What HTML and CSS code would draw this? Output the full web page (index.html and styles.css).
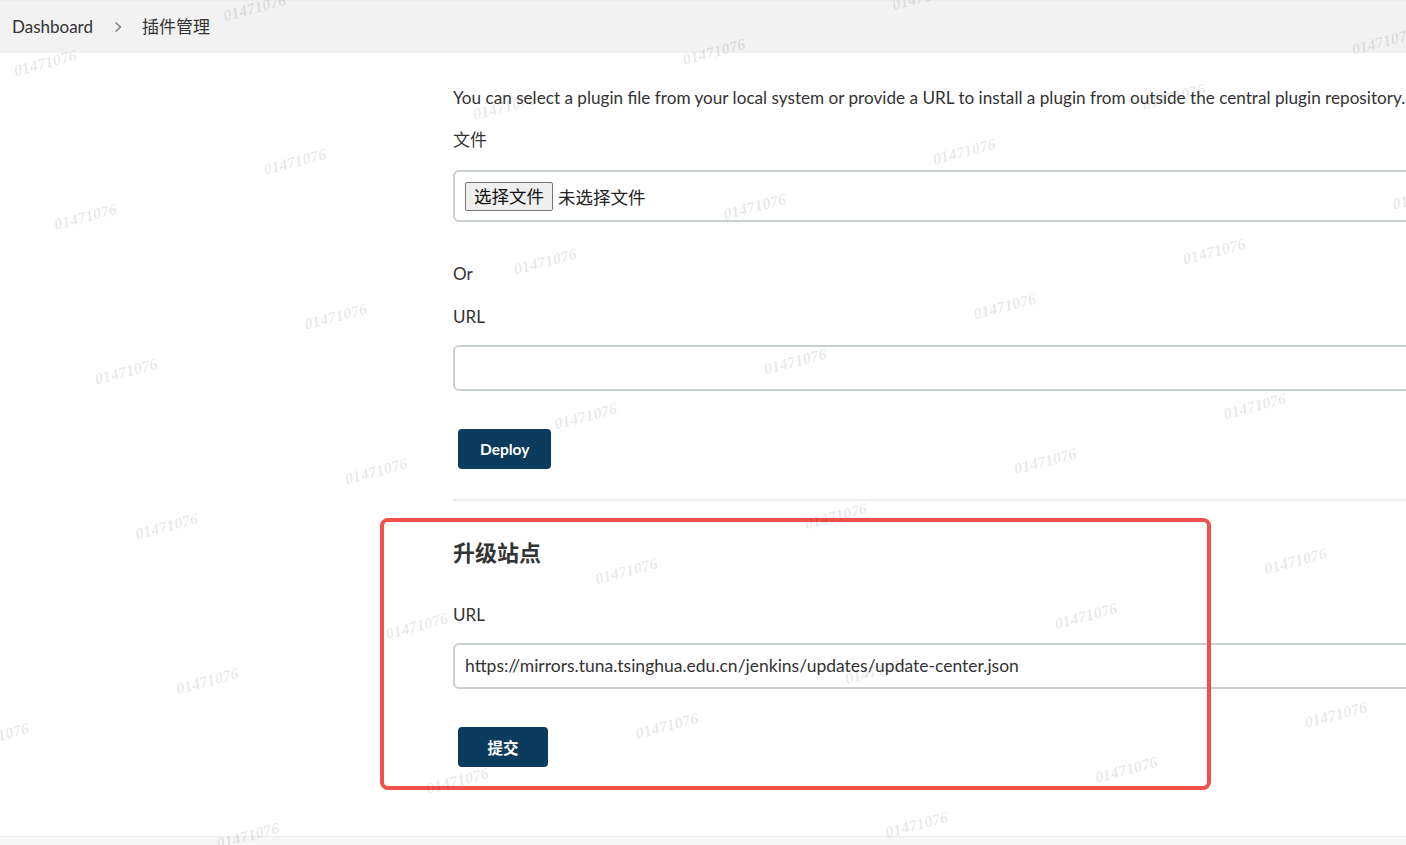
FILE: index.html
```html
<!DOCTYPE html>
<html lang="zh-CN">
<head>
<meta charset="utf-8">
<title>插件管理 - Jenkins</title>
<link rel="stylesheet" href="styles.css">
</head>
<body>
<div class="page">
  <header class="breadcrumbs">
    <a class="crumb">Dashboard</a>
    <svg class="chev" width="8" height="12" viewBox="0 0 8 12"><path d="M1.5 1.5l5 4.5-5 4.5"/></svg>
    <a class="crumb">插件管理</a>
  </header>

  <main class="main">
    <div class="content">
      <p class="desc">You can select a plugin file from your local system or provide a URL to install a plugin from outside the central plugin repository.</p>
      <form class="upload">
        <label class="label">文件</label>
        <div class="file-box">
          <span class="file-btn">选择文件</span>
          <span class="file-none">未选择文件</span>
        </div>
        <p class="or">Or</p>
        <label class="label label-url">URL</label>
        <div class="text-input"></div>
        <button class="btn" type="button">Deploy</button>
      </form>

      <hr class="divider">

      <section class="site">
        <h2 class="site-title">升级站点</h2>
        <label class="label label-site">URL</label>
        <div class="text-input">https://mirrors.tuna.tsinghua.edu.cn/jenkins/updates/update-center.json</div>
        <button class="btn" type="button">提交</button>
      </section>
    </div>
  </main>

  <footer class="footer"></footer>

  <div class="annotation"></div>
  <div class="watermark"><div class="wm-grid" id="wm"></div></div>
</div>
<script src="wm.js"></script>
</body>
</html>
```

FILE: wm.js
```js
(function () {
  var grid = document.getElementById('wm');
  var html = '';
  for (var i = 0; i < 14 * 14; i++) {
    html += '<span>01471076</span>';
  }
  grid.innerHTML = html;
})();
```

FILE: styles.css
```css
* { box-sizing: border-box; }

html, body {
  margin: 0;
  padding: 0;
  background: #fff;
}

body {
  font-family: Lato, "Noto Sans CJK SC", sans-serif;
  font-size: 17px;
  color: #333;
  overflow: hidden;
}

.page {
  position: relative;
  width: 1406px;
  height: 845px;
  overflow: hidden;
  display: flex;
  flex-direction: column;
}

/* breadcrumb bar */
.breadcrumbs {
  height: 53px;
  flex: none;
  background: #f2f2f2;
  display: flex;
  align-items: center;
  padding-left: 12px;
  gap: 20px;
  border-top: 1px solid #ececec;
}

.crumb {
  font-size: 17px;
  color: #333;
  line-height: 24px;
}

.chev {
  fill: none;
  stroke: #777;
  stroke-width: 1.3;
  margin-left: 1px;
}

/* main content */
.main {
  flex: 1;
  padding-left: 453px;
}

.content {
  width: 1150px;
}

.desc {
  margin: 33px 0 0;
  line-height: 24px;
  white-space: nowrap;
  font-size: 17.15px;
}

.upload {
  display: flex;
  flex-direction: column;
  align-items: flex-start;
}

.label {
  display: block;
  line-height: 24px;
  margin-top: 18px;
}

.file-box {
  margin-top: 18px;
  width: 100%;
  height: 52px;
  border: 2px solid #c9d0d4;
  border-radius: 6px;
  display: flex;
  align-items: center;
  padding-left: 10px;
  gap: 5px;
}

.file-btn {
  height: 29px;
  line-height: 27px;
  padding: 0 8px;
  background: #efefef;
  border: 1px solid #767676;
  border-radius: 2px;
  color: #111;
  font-size: 17.5px;
}

.file-none {
  color: #222;
  font-size: 17.5px;
}

.or {
  margin: 40px 0 0;
  line-height: 24px;
}

.label-url {
  margin-top: 19px;
}

.text-input {
  margin-top: 16px;
  width: 100%;
  height: 46px;
  border: 2px solid #c9d0d4;
  border-radius: 6px;
  padding-left: 10px;
  line-height: 42px;
  color: #333;
  white-space: nowrap;
  font-size: 17.5px;
}

.btn {
  margin: 38px 0 0 5px;
  height: 40px;
  min-width: 90px;
  padding: 0 22px;
  border: none;
  border-radius: 4px;
  background: #0b3b5d;
  color: #fff;
  font-family: Lato, "Noto Sans CJK SC", sans-serif;
  font-weight: 700;
  font-size: 15.5px;
}

.divider {
  margin: 30px 0 0;
  border: none;
  height: 2px;
  background: #eeeeee;
}

.site {
  display: flex;
  flex-direction: column;
  align-items: flex-start;
}

.site-title {
  margin: 38px 0 0;
  font-size: 22px;
  line-height: 28px;
  font-weight: 700;
  color: #333;
}

.label-site {
  margin-top: 36px;
}

/* footer */
.footer {
  height: 9px;
  flex: none;
  background: #f7f7f7;
  border-top: 1px solid #eeeeee;
}

/* red annotation frame drawn over the screenshot */
.annotation {
  position: absolute;
  left: 380px;
  top: 518px;
  width: 831px;
  height: 272px;
  border: 4px solid #f4504b;
  border-radius: 8px;
  pointer-events: none;
}

/* watermark overlay */
.watermark {
  position: absolute;
  inset: 0;
  overflow: hidden;
  pointer-events: none;
}

.wm-grid {
  position: absolute;
  left: -488px;
  top: -136px;
  transform: rotate(-14.7deg);
  transform-origin: 0 0;
  display: grid;
  grid-template-columns: repeat(14, 216.6px);
  grid-auto-rows: 159.8px;
}

.wm-grid span {
  font: italic bold 16px/16px "Liberation Serif", serif;
  color: rgba(0, 0, 0, 0.1);
  white-space: nowrap;
}
```
